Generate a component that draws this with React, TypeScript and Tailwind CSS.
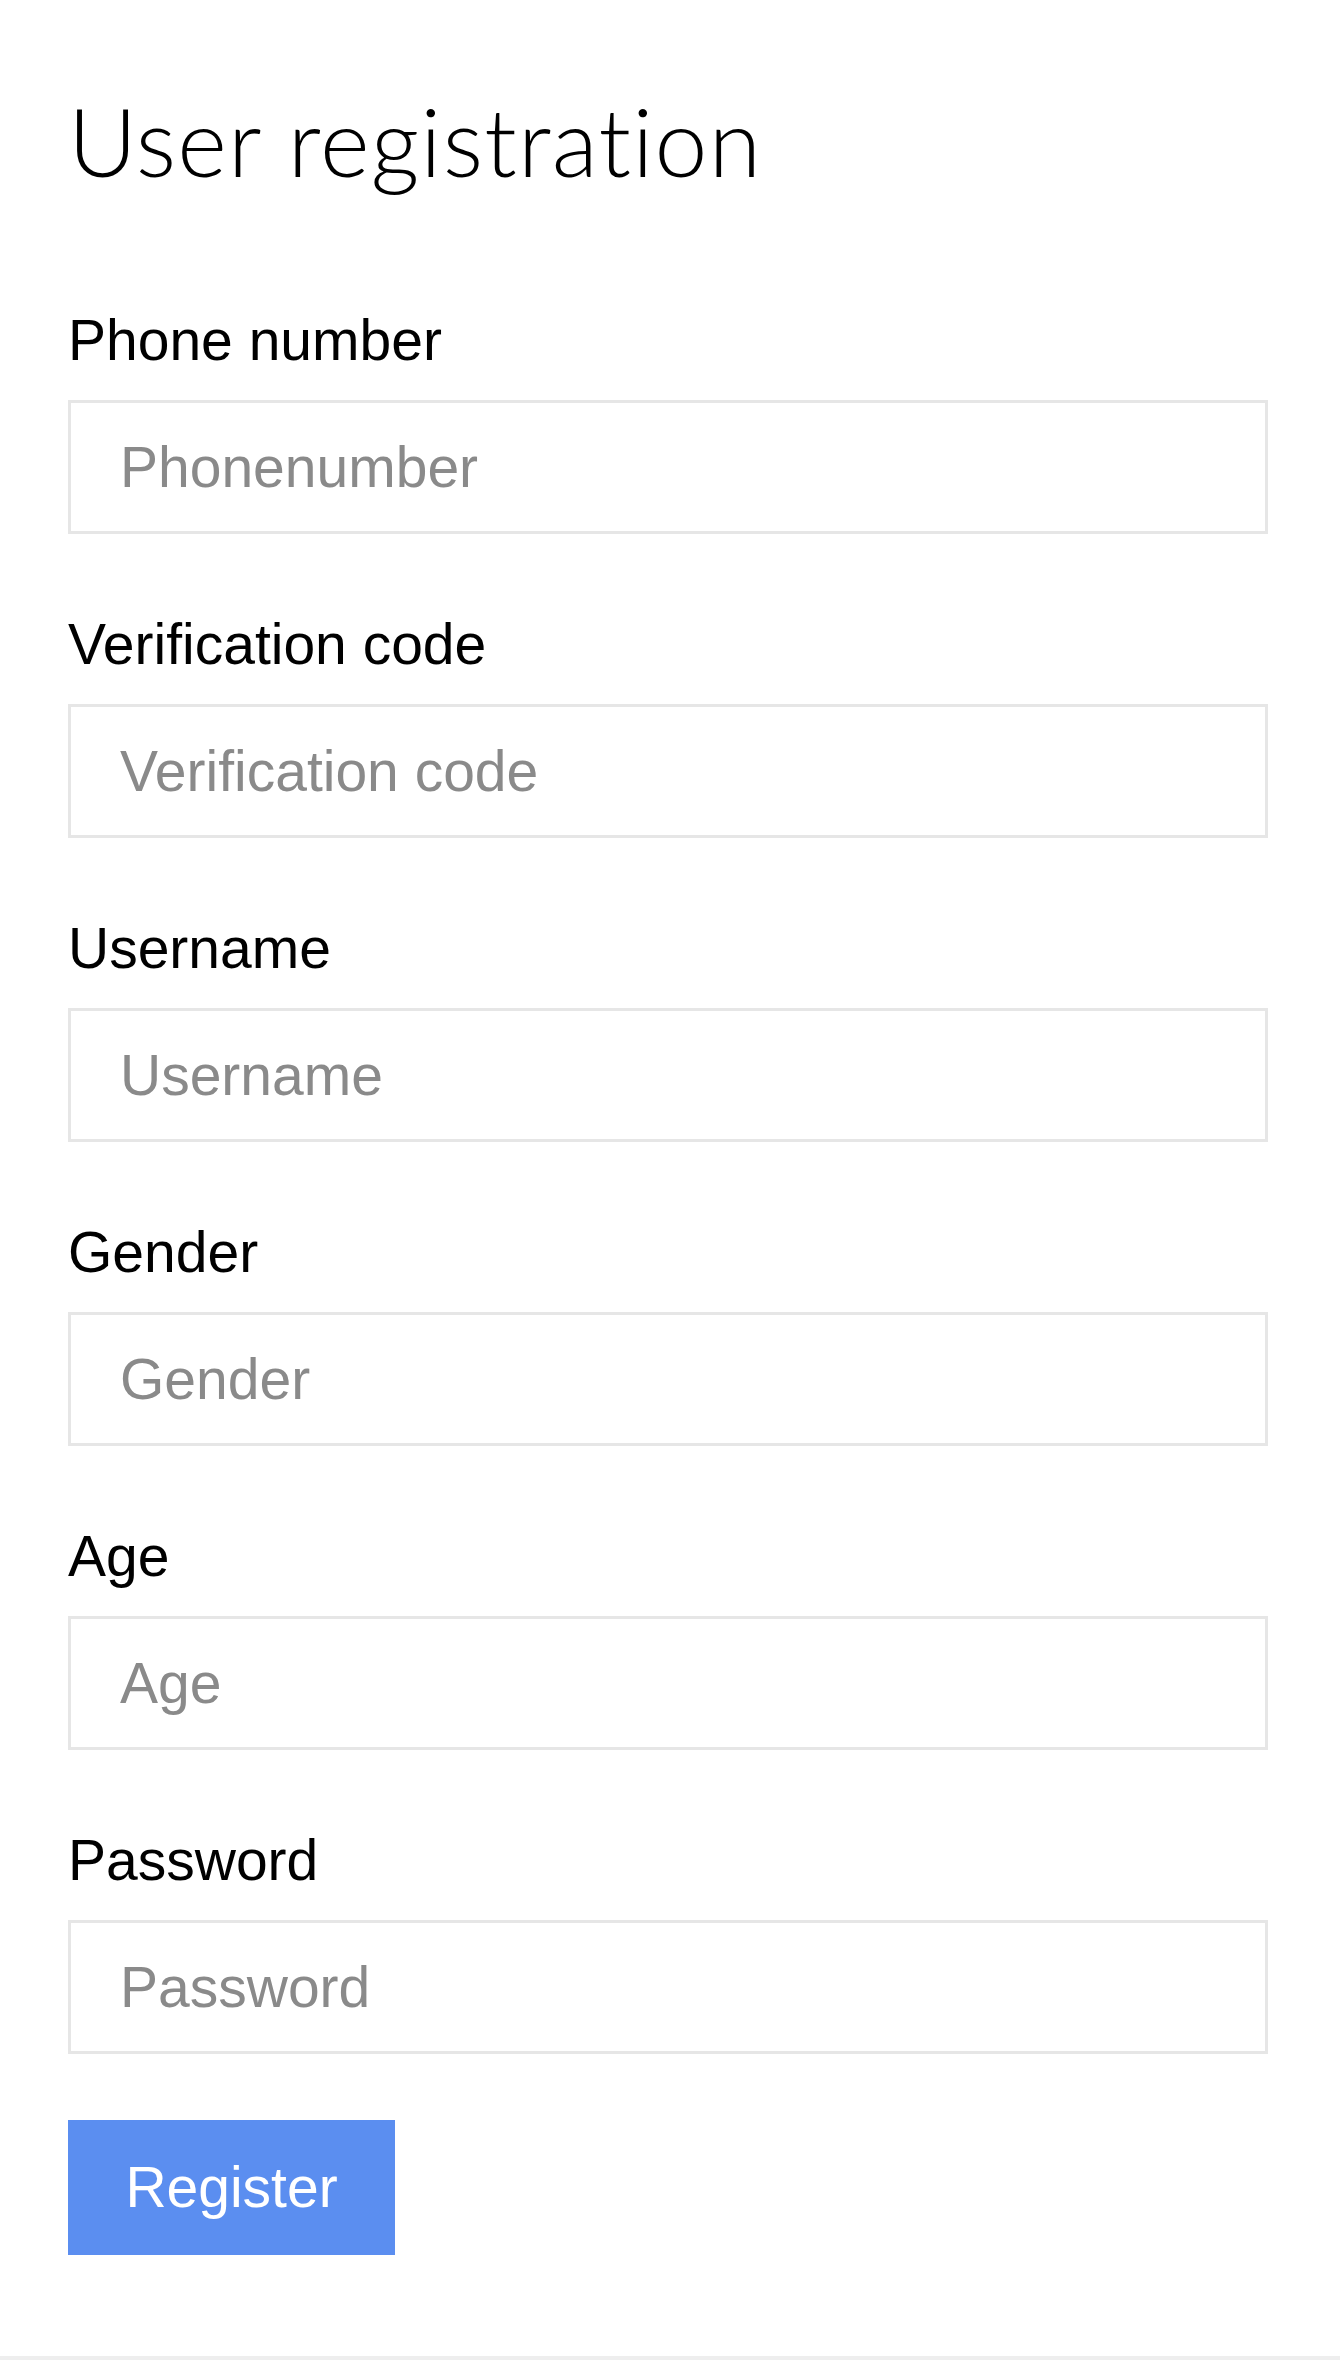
import React from "react";

const fields = [
  { label: "Phone number", placeholder: "Phonenumber" },
  { label: "Verification code", placeholder: "Verification code" },
  { label: "Username", placeholder: "Username" },
  { label: "Gender", placeholder: "Gender" },
  { label: "Age", placeholder: "Age" },
  { label: "Password", placeholder: "Password" },
];

export default function App() {
  return (
    <div className="bg-white font-['Liberation_Sans',Arial,sans-serif] text-black">
      <div className="pl-[68px] pr-[72px] pt-[93px] pb-[101px] border-b-4 border-[#eeeeee]">
        <h1 className="font-['Lato','Liberation_Sans',sans-serif] font-light text-[95px] tracking-[1.2px] [font-variant-ligatures:none] leading-none h-[94px]">
          User registration
        </h1>

        <form className="mt-[125px] flex flex-col gap-[82px]" onSubmit={(e) => e.preventDefault()}>
          {fields.map((f) => (
            <label key={f.label} className="flex flex-col">
              <span className="text-[57px] leading-none h-[57px]">{f.label}</span>
              <input
                type={f.label === "Password" ? "password" : "text"}
                placeholder={f.placeholder}
                className="mt-[31px] h-[134px] w-full border-[3px] border-[#e6e6e6] pl-[49px] text-[57px] outline-none placeholder:text-[#8a8a8a]"
              />
            </label>
          ))}
        </form>

        <button
          type="button"
          className="mt-[66px] w-[327px] h-[135px] bg-[#5b8ef0] text-white text-[57px] leading-none"
        >
          Register
        </button>
      </div>
    </div>
  );
}
